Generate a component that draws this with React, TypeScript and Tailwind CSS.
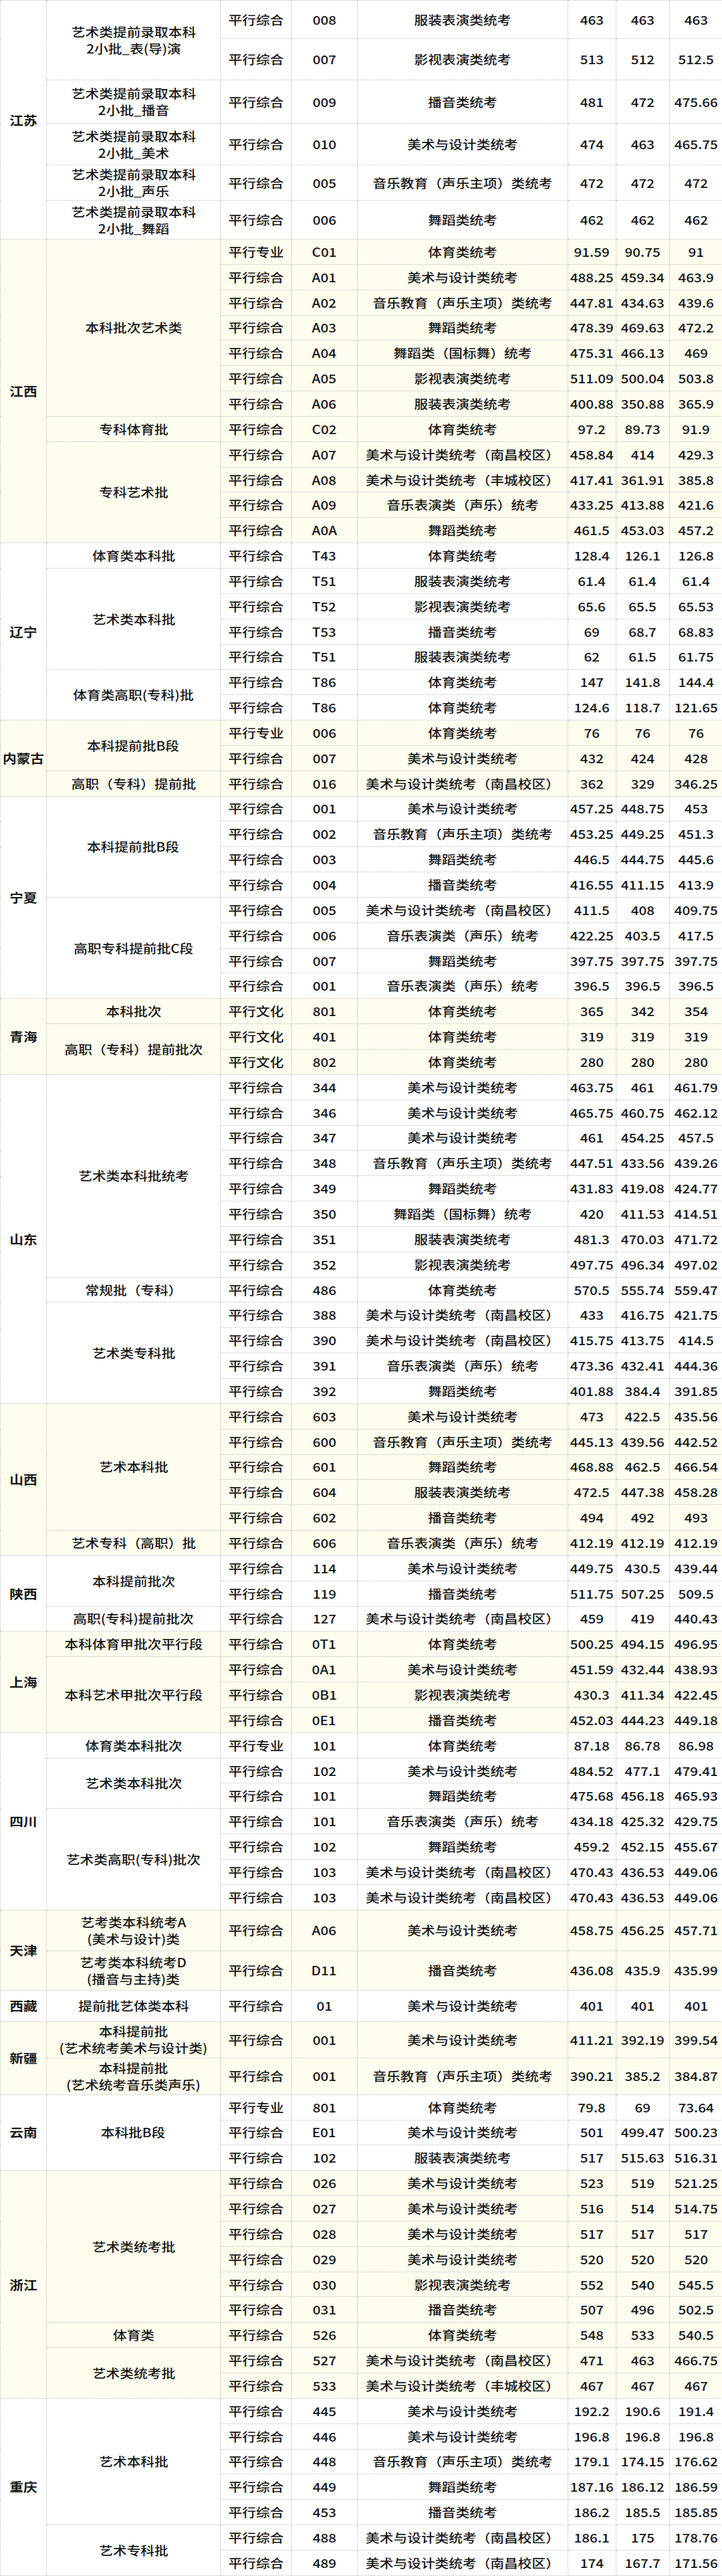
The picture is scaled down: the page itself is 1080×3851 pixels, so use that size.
import React from 'react';

type Row = { t: string; c: string; n: string; v: string[]; h: string };
type Batch = { name: string[]; rows: Row[] };
type Province = { name: string; hl: boolean; batches: Batch[] };

const H = 'h-[37.85px]';

// code, name, max, min, avg, type, row height
const r = (c: string, n: string, a: string, b: string, d: string, t = '平行综合', h = H): Row => ({
  t,
  c,
  n,
  v: [a, b, d],
  h,
});

const provinces: Province[] = [
  {
    name: '江苏',
    hl: false,
    batches: [
      {
        name: ['艺术类提前录取本科', '2小批_表(导)演'],
        rows: [
          r('008', '服装表演类统考', '463', '463', '463', '平行综合', 'h-[57px]'),
          r('007', '影视表演类统考', '513', '512', '512.5', '平行综合', 'h-[62px]'),
        ],
      },
      { name: ['艺术类提前录取本科', '2小批_播音'], rows: [r('009', '播音类统考', '481', '472', '475.66', '平行综合', 'h-[65px]')] },
      { name: ['艺术类提前录取本科', '2小批_美术'], rows: [r('010', '美术与设计类统考', '474', '463', '465.75', '平行综合', 'h-[62px]')] },
      { name: ['艺术类提前录取本科', '2小批_声乐'], rows: [r('005', '音乐教育（声乐主项）类统考', '472', '472', '472', '平行综合', 'h-[53px]')] },
      { name: ['艺术类提前录取本科', '2小批_舞蹈'], rows: [r('006', '舞蹈类统考', '462', '462', '462', '平行综合', 'h-[58px]')] },
    ],
  },
  {
    name: '江西',
    hl: true,
    batches: [
      {
        name: ['本科批次艺术类'],
        rows: [
          r('C01', '体育类统考', '91.59', '90.75', '91', '平行专业'),
          r('A01', '美术与设计类统考', '488.25', '459.34', '463.9'),
          r('A02', '音乐教育（声乐主项）类统考', '447.81', '434.63', '439.6'),
          r('A03', '舞蹈类统考', '478.39', '469.63', '472.2'),
          r('A04', '舞蹈类（国标舞）统考', '475.31', '466.13', '469'),
          r('A05', '影视表演类统考', '511.09', '500.04', '503.8'),
          r('A06', '服装表演类统考', '400.88', '350.88', '365.9'),
        ],
      },
      { name: ['专科体育批'], rows: [r('C02', '体育类统考', '97.2', '89.73', '91.9')] },
      {
        name: ['专科艺术批'],
        rows: [
          r('A07', '美术与设计类统考（南昌校区）', '458.84', '414', '429.3'),
          r('A08', '美术与设计类统考（丰城校区）', '417.41', '361.91', '385.8'),
          r('A09', '音乐表演类（声乐）统考', '433.25', '413.88', '421.6'),
          r('A0A', '舞蹈类统考', '461.5', '453.03', '457.2'),
        ],
      },
    ],
  },
  {
    name: '辽宁',
    hl: false,
    batches: [
      { name: ['体育类本科批'], rows: [r('T43', '体育类统考', '128.4', '126.1', '126.8')] },
      {
        name: ['艺术类本科批'],
        rows: [
          r('T51', '服装表演类统考', '61.4', '61.4', '61.4'),
          r('T52', '影视表演类统考', '65.6', '65.5', '65.53'),
          r('T53', '播音类统考', '69', '68.7', '68.83'),
          r('T51', '服装表演类统考', '62', '61.5', '61.75'),
        ],
      },
      {
        name: ['体育类高职(专科)批'],
        rows: [r('T86', '体育类统考', '147', '141.8', '144.4'), r('T86', '体育类统考', '124.6', '118.7', '121.65')],
      },
    ],
  },
  {
    name: '内蒙古',
    hl: true,
    batches: [
      {
        name: ['本科提前批B段'],
        rows: [r('006', '体育类统考', '76', '76', '76', '平行专业'), r('007', '美术与设计类统考', '432', '424', '428')],
      },
      { name: ['高职（专科）提前批'], rows: [r('016', '美术与设计类统考（南昌校区）', '362', '329', '346.25')] },
    ],
  },
  {
    name: '宁夏',
    hl: false,
    batches: [
      {
        name: ['本科提前批B段'],
        rows: [
          r('001', '美术与设计类统考', '457.25', '448.75', '453'),
          r('002', '音乐教育（声乐主项）类统考', '453.25', '449.25', '451.3'),
          r('003', '舞蹈类统考', '446.5', '444.75', '445.6'),
          r('004', '播音类统考', '416.55', '411.15', '413.9'),
        ],
      },
      {
        name: ['高职专科提前批C段'],
        rows: [
          r('005', '美术与设计类统考（南昌校区）', '411.5', '408', '409.75'),
          r('006', '音乐表演类（声乐）统考', '422.25', '403.5', '417.5'),
          r('007', '舞蹈类统考', '397.75', '397.75', '397.75'),
          r('001', '音乐表演类（声乐）统考', '396.5', '396.5', '396.5'),
        ],
      },
    ],
  },
  {
    name: '青海',
    hl: true,
    batches: [
      { name: ['本科批次'], rows: [r('801', '体育类统考', '365', '342', '354', '平行文化')] },
      {
        name: ['高职（专科）提前批次'],
        rows: [r('401', '体育类统考', '319', '319', '319', '平行文化'), r('802', '体育类统考', '280', '280', '280', '平行文化')],
      },
    ],
  },
  {
    name: '山东',
    hl: false,
    batches: [
      {
        name: ['艺术类本科批统考'],
        rows: [
          r('344', '美术与设计类统考', '463.75', '461', '461.79'),
          r('346', '美术与设计类统考', '465.75', '460.75', '462.12'),
          r('347', '美术与设计类统考', '461', '454.25', '457.5'),
          r('348', '音乐教育（声乐主项）类统考', '447.51', '433.56', '439.26'),
          r('349', '舞蹈类统考', '431.83', '419.08', '424.77'),
          r('350', '舞蹈类（国标舞）统考', '420', '411.53', '414.51'),
          r('351', '服装表演类统考', '481.3', '470.03', '471.72'),
          r('352', '影视表演类统考', '497.75', '496.34', '497.02'),
        ],
      },
      { name: ['常规批（专科）'], rows: [r('486', '体育类统考', '570.5', '555.74', '559.47')] },
      {
        name: ['艺术类专科批'],
        rows: [
          r('388', '美术与设计类统考（南昌校区）', '433', '416.75', '421.75'),
          r('390', '美术与设计类统考（南昌校区）', '415.75', '413.75', '414.5'),
          r('391', '音乐表演类（声乐）统考', '473.36', '432.41', '444.36'),
          r('392', '舞蹈类统考', '401.88', '384.4', '391.85'),
        ],
      },
    ],
  },
  {
    name: '山西',
    hl: true,
    batches: [
      {
        name: ['艺术本科批'],
        rows: [
          r('603', '美术与设计类统考', '473', '422.5', '435.56'),
          r('600', '音乐教育（声乐主项）类统考', '445.13', '439.56', '442.52'),
          r('601', '舞蹈类统考', '468.88', '462.5', '466.54'),
          r('604', '服装表演类统考', '472.5', '447.38', '458.28'),
          r('602', '播音类统考', '494', '492', '493'),
        ],
      },
      { name: ['艺术专科（高职）批'], rows: [r('606', '音乐表演类（声乐）统考', '412.19', '412.19', '412.19')] },
    ],
  },
  {
    name: '陕西',
    hl: false,
    batches: [
      {
        name: ['本科提前批次'],
        rows: [r('114', '美术与设计类统考', '449.75', '430.5', '439.44'), r('119', '播音类统考', '511.75', '507.25', '509.5')],
      },
      { name: ['高职(专科)提前批次'], rows: [r('127', '美术与设计类统考（南昌校区）', '459', '419', '440.43')] },
    ],
  },
  {
    name: '上海',
    hl: true,
    batches: [
      { name: ['本科体育甲批次平行段'], rows: [r('0T1', '体育类统考', '500.25', '494.15', '496.95')] },
      {
        name: ['本科艺术甲批次平行段'],
        rows: [
          r('0A1', '美术与设计类统考', '451.59', '432.44', '438.93'),
          r('0B1', '影视表演类统考', '430.3', '411.34', '422.45'),
          r('0E1', '播音类统考', '452.03', '444.23', '449.18'),
        ],
      },
    ],
  },
  {
    name: '四川',
    hl: false,
    batches: [
      { name: ['体育类本科批次'], rows: [r('101', '体育类统考', '87.18', '86.78', '86.98', '平行专业')] },
      {
        name: ['艺术类本科批次'],
        rows: [r('102', '美术与设计类统考', '484.52', '477.1', '479.41'), r('101', '舞蹈类统考', '475.68', '456.18', '465.93')],
      },
      {
        name: ['艺术类高职(专科)批次'],
        rows: [
          r('101', '音乐表演类（声乐）统考', '434.18', '425.32', '429.75'),
          r('102', '舞蹈类统考', '459.2', '452.15', '455.67'),
          r('103', '美术与设计类统考（南昌校区）', '470.43', '436.53', '449.06'),
          r('103', '美术与设计类统考（南昌校区）', '470.43', '436.53', '449.06'),
        ],
      },
    ],
  },
  {
    name: '天津',
    hl: true,
    batches: [
      {
        name: ['艺考类本科统考A', '(美术与设计)类'],
        rows: [r('A06', '美术与设计类统考', '458.75', '456.25', '457.71', '平行综合', 'h-[61px]')],
      },
      {
        name: ['艺考类本科统考D', '(播音与主持)类'],
        rows: [r('D11', '播音类统考', '436.08', '435.9', '435.99', '平行综合', 'h-[59px]')],
      },
    ],
  },
  {
    name: '西藏',
    hl: false,
    batches: [{ name: ['提前批艺体类本科'], rows: [r('01', '美术与设计类统考', '401', '401', '401', '平行综合', 'h-[47px]')] }],
  },
  {
    name: '新疆',
    hl: true,
    batches: [
      {
        name: ['本科提前批', '(艺术统考美术与设计类)'],
        rows: [r('001', '美术与设计类统考', '411.21', '392.19', '399.54', '平行综合', 'h-[54px]')],
      },
      {
        name: ['本科提前批', '(艺术统考音乐类声乐)'],
        rows: [r('001', '音乐教育（声乐主项）类统考', '390.21', '385.2', '384.87', '平行综合', 'h-[55px]')],
      },
    ],
  },
  {
    name: '云南',
    hl: false,
    batches: [
      {
        name: ['本科批B段'],
        rows: [
          r('801', '体育类统考', '79.8', '69', '73.64', '平行专业'),
          r('E01', '美术与设计类统考', '501', '499.47', '500.23'),
          r('102', '服装表演类统考', '517', '515.63', '516.31'),
        ],
      },
    ],
  },
  {
    name: '浙江',
    hl: true,
    batches: [
      {
        name: ['艺术类统考批'],
        rows: [
          r('026', '美术与设计类统考', '523', '519', '521.25'),
          r('027', '美术与设计类统考', '516', '514', '514.75'),
          r('028', '美术与设计类统考', '517', '517', '517'),
          r('029', '美术与设计类统考', '520', '520', '520'),
          r('030', '影视表演类统考', '552', '540', '545.5'),
          r('031', '播音类统考', '507', '496', '502.5'),
        ],
      },
      { name: ['体育类'], rows: [r('526', '体育类统考', '548', '533', '540.5')] },
      {
        name: ['艺术类统考批'],
        rows: [
          r('527', '美术与设计类统考（南昌校区）', '471', '463', '466.75'),
          r('533', '美术与设计类统考（丰城校区）', '467', '467', '467'),
        ],
      },
    ],
  },
  {
    name: '重庆',
    hl: false,
    batches: [
      {
        name: ['艺术本科批'],
        rows: [
          r('445', '美术与设计类统考', '192.2', '190.6', '191.4'),
          r('446', '美术与设计类统考', '196.8', '196.8', '196.8'),
          r('448', '音乐教育（声乐主项）类统考', '179.1', '174.15', '176.62'),
          r('449', '舞蹈类统考', '187.16', '186.12', '186.59'),
          r('453', '播音类统考', '186.2', '185.5', '185.85'),
        ],
      },
      {
        name: ['艺术专科批'],
        rows: [
          r('488', '美术与设计类统考（南昌校区）', '186.1', '175', '178.76'),
          r('489', '美术与设计类统考（南昌校区）', '174', '167.7', '171.56'),
        ],
      },
    ],
  },
];

const cell = 'border border-dotted border-[#bdbdbd] p-0 text-center align-middle';

const Txt: React.FC<{ children: React.ReactNode }> = ({ children }) => (
  <span className="inline-block scale-x-115 whitespace-nowrap">{children}</span>
);

export default function App() {
  return (
    <div className="w-[1080px] bg-white overflow-hidden font-['Noto_Sans_CJK_SC',sans-serif] text-[18px] font-medium text-[#161616]">
      <table className="w-[1080px] table-fixed border-collapse">
        <colgroup>
          <col className="w-[69px]" />
          <col className="w-[260px]" />
          <col className="w-[106px]" />
          <col className="w-[99px]" />
          <col className="w-[315px]" />
          <col className="w-[72px]" />
          <col className="w-[80px]" />
          <col className="w-[79px]" />
        </colgroup>
        <tbody>
          {provinces.flatMap((p) => {
            const total = p.batches.reduce((s, b) => s + b.rows.length, 0);
            const bg = p.hl ? 'bg-[#fffdee]' : 'bg-white';
            return p.batches.flatMap((b, bi) =>
              b.rows.map((row, ri) => (
                <tr key={`${p.name}-${bi}-${ri}`} className={`${row.h} ${bg}`}>
                  {bi === 0 && ri === 0 && (
                    <td rowSpan={total} className={`${cell} font-bold`}>
                      <Txt>{p.name}</Txt>
                    </td>
                  )}
                  {ri === 0 && (
                    <td rowSpan={b.rows.length} className={`${cell} leading-[25px]`}>
                      <span className="inline-block scale-x-115 whitespace-nowrap">
                        {b.name.map((line, li) => (
                          <span key={li} className="block">
                            {line}
                          </span>
                        ))}
                      </span>
                    </td>
                  )}
                  <td className={cell}>
                    <Txt>{row.t}</Txt>
                  </td>
                  <td className={cell}>
                    <Txt>{row.c}</Txt>
                  </td>
                  <td className={cell}>
                    <Txt>{row.n}</Txt>
                  </td>
                  {row.v.map((v, vi) => (
                    <td key={vi} className={cell}>
                      <Txt>{v}</Txt>
                    </td>
                  ))}
                </tr>
              ))
            );
          })}
        </tbody>
      </table>
    </div>
  );
}
